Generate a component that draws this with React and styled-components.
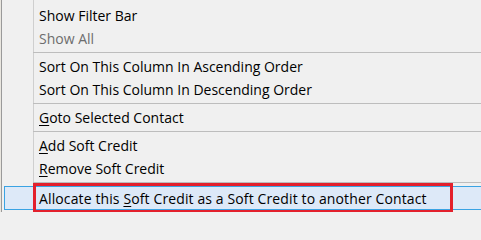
import React from 'react';
import styled, { createGlobalStyle } from 'styled-components';

const GlobalStyle = createGlobalStyle`
  html {
    background: #f0f0f0;
  }
  body {
    margin: 0;
    padding: 0;
    width: 481px;
    height: 212px;
    background: #e9e6df;
    overflow: hidden;
  }
`;

const Menu = styled.div`
  width: 480px;
  height: 212px;
  margin-left: 1px;
  padding-top: 4px;
  box-sizing: border-box;
  overflow: hidden;
  border-left: 1px solid #9a9a9a;
  background-color: #f0f0f0;
  /* gutter line next to the icon column */
  background-image: linear-gradient(#cfcfcf, #cfcfcf);
  background-size: 1px 100%;
  background-position: 31px 0;
  background-repeat: no-repeat;
  font-family: 'Open Sans', 'Noto Sans', sans-serif;
  font-size: 14px;
  color: #000;
`;

const Item = styled.div`
  position: relative;
  display: flex;
  align-items: center;
  height: 23px;
  padding-left: 37px;
  box-sizing: border-box;
  white-space: nowrap;
  color: ${(p) => (p.disabled ? '#6d6d6d' : '#000')};
`;

const HotItem = styled(Item)`
  height: 24px;
  margin: 1px -4px 0 2px;
  padding-left: 34px;
  border: 1px solid #3aa3e3;
  background: #dde9f8;
  letter-spacing: 0.12px;
`;

const Separator = styled.div`
  height: 5px;
  padding-top: 2px;
  margin-left: 31px;
  box-sizing: border-box;
  &::after {
    content: '';
    display: block;
    height: 1px;
    background: #bdbdbd;
  }
`;

const Key = styled.span`
  text-decoration: underline;
  text-underline-offset: 2px;
`;

const Callout = styled.div`
  position: absolute;
  left: 28px;
  top: -4px;
  width: 420px;
  height: 30px;
  border: 3px solid #e3202c;
  box-sizing: border-box;
  pointer-events: none;
`;

export default function App() {
  return (
    <>
      <GlobalStyle />
      <Menu>
        <Item>Show Filter Bar</Item>
        <Item disabled>Show All</Item>
        <Separator />
        <Item>Sort On This Column In Ascending Order</Item>
        <Item>Sort On This Column In Descending Order</Item>
        <Separator />
        <Item><Key>G</Key>oto Selected Contact</Item>
        <Separator />
        <Item><Key>A</Key>dd Soft Credit</Item>
        <Item><Key>R</Key>emove Soft Credit</Item>
        <Separator />
        <HotItem>
          Allocate this&nbsp;<Key>S</Key>oft Credit as a Soft Credit to another Contact
          <Callout />
        </HotItem>
      </Menu>
    </>
  );
}
